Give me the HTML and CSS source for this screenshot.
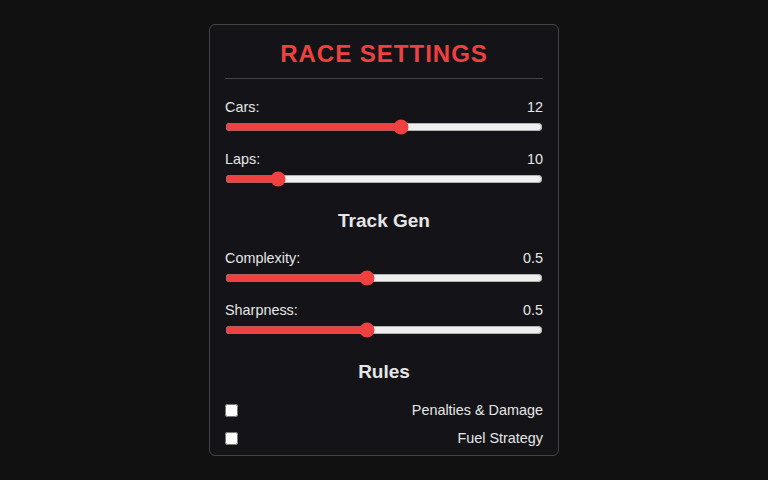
FILE: index.html
```html
<!DOCTYPE html>
<html lang="en">
  <head>
    <meta charset="UTF-8">
    <meta name="viewport" content="width=device-width, initial-scale=1.0">
    <title>Race Settings</title>
    <link rel="stylesheet" href="styles.css">
  </head>
  <body>
    <div class="panel">
        <h1 class="title">RACE SETTINGS</h1>

        <div class="setting">
            <div class="setting-row"><span>Cars:</span><span>12</span></div>
            <input type="range" class="slider" min="2" max="20" value="12">
        </div>

        <div class="setting">
            <div class="setting-row"><span>Laps:</span><span>10</span></div>
            <input type="range" class="slider" min="3" max="50" value="10">
        </div>

        <h2 class="section">Track Gen</h2>

        <div class="setting">
            <div class="setting-row"><span>Complexity:</span><span>0.5</span></div>
            <input type="range" class="slider" min="0.1" max="1" step="0.1" value="0.5">
        </div>

        <div class="setting">
            <div class="setting-row"><span>Sharpness:</span><span>0.5</span></div>
            <input type="range" class="slider" min="0.1" max="1" step="0.1" value="0.5">
        </div>

        <h2 class="section">Rules</h2>

        <label class="check-row"><input type="checkbox"><span>Penalties &amp; Damage</span></label>
        <label class="check-row"><input type="checkbox"><span>Fuel Strategy</span></label>
    </div>
  </body>
</html>
```

FILE: styles.css
```css
body {
    background-color: #111111;
    font-family: "Liberation Sans", Arial, sans-serif;
    color: #e6e6e6;
    margin: 0;
}

.panel {
    width: 318px;
    margin: 24px auto 0;
    padding: 15px 15px 3px;
    background-color: #141418;
    border: 1px solid #444448;
    border-radius: 6px;
}

.title {
    margin: 0;
    padding-bottom: 10px;
    border-bottom: 1px solid #444448;
    color: #f0403f;
    font-size: 24px;
    line-height: 28px;
    text-align: center;
    letter-spacing: 1px;
}

.setting {
    margin-top: 17px;
}

.title + .setting {
    margin-top: 19px;
}

.setting + .setting {
    margin-top: 15px;
}

.setting-row {
    display: flex;
    justify-content: space-between;
    padding-top: 1px;
    font-size: 14.4px;
    line-height: 17px;
}

.slider {
    display: block;
    width: 100%;
    margin: 3px 0 0;
    height: 16px;
    accent-color: #f04040;
}

.section {
    margin: 23px 0 0;
    font-size: 19px;
    line-height: 22px;
    text-align: center;
}

.check-row {
    display: flex;
    justify-content: space-between;
    align-items: center;
    font-size: 14.4px;
    height: 28px;
}

.section + .check-row {
    margin-top: 13px;
}

.check-row input {
    margin: 0;
    width: 13px;
    height: 13px;
}
```
